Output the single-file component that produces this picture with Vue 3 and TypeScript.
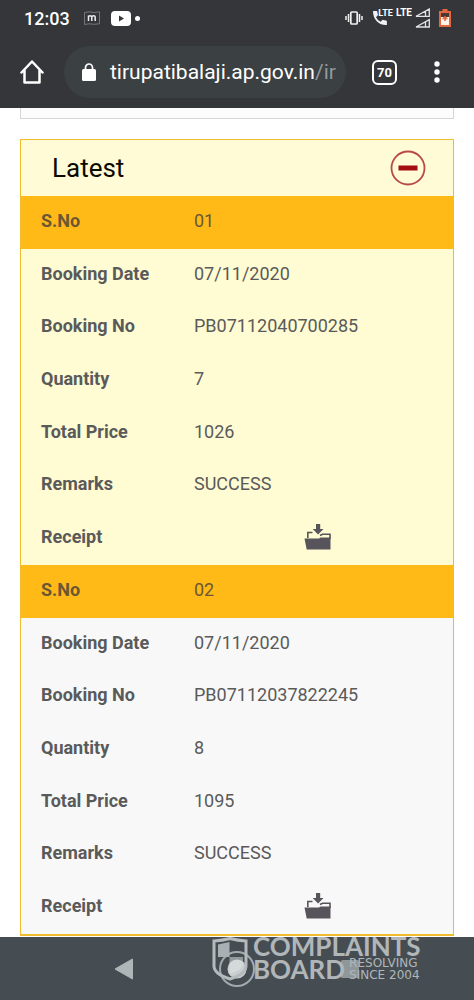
<script setup lang="ts">
interface Field {
  label: string
  value: string
}
interface Booking {
  sno: string
  tone: 'cream' | 'light'
  fields: Field[]
}

const bookings: Booking[] = [
  {
    sno: '01',
    tone: 'cream',
    fields: [
      { label: 'Booking Date', value: '07/11/2020' },
      { label: 'Booking No', value: 'PB07112040700285' },
      { label: 'Quantity', value: '7' },
      { label: 'Total Price', value: '1026' },
      { label: 'Remarks', value: 'SUCCESS' },
    ],
  },
  {
    sno: '02',
    tone: 'light',
    fields: [
      { label: 'Booking Date', value: '07/11/2020' },
      { label: 'Booking No', value: 'PB07112037822245' },
      { label: 'Quantity', value: '8' },
      { label: 'Total Price', value: '1095' },
      { label: 'Remarks', value: 'SUCCESS' },
    ],
  },
]
</script>

<template>
  <div class="phone">
    <header class="chrome">
      <div class="status">
        <span class="clock">12:03</span>
        <svg class="app-m" width="16" height="14" viewBox="0 0 16 14">
          <path d="M.5 1.5 5 .8l5 .7 5.500-.7v12l-5.500.5-5-.5-4.500.7z" fill="none" stroke="#75767a" />
          <path d="M4.500 10V4.500M4.500 6q0-1.300 1.500-1.300T7.800 6v4M7.800 6q0-1.300 1.700-1.300T11.200 6v4" fill="none" stroke="#eee" stroke-width="1.500" />
        </svg>
        <svg class="tube" width="20" height="15" viewBox="0 0 20 15">
          <rect width="20" height="15" rx="4" fill="#fff" />
          <path d="M8 4.500v6l5-3z" fill="#35363a" />
        </svg>
        <span class="dot"></span>
        <span class="grow"></span>
        <svg width="18" height="14" viewBox="0 0 18 14" fill="none" stroke="#f1f1f1">
          <rect x="5.800" y="1" width="6.400" height="12" rx="1" stroke-width="1.700" />
          <path d="M3.500 3v8M14.500 3v8" stroke-width="1.500" />
          <path d="M1 5v4M17 5v4" stroke-width="1.500" />
        </svg>
        <span class="call">
          <svg width="16" height="16" viewBox="0 0 16 16">
            <path d="M1 1h3.500q.8 0 .9 1 .1 1.700.6 3L4 7.200q1.500 3 4.500 4.600l2.200-2q1.500.5 3.300.6.900.1.900 1V15Q9 15.400 5 11.500T1 1z" fill="#f1f1f1" />
          </svg>
          <span class="lte small">LTE</span>
        </span>
        <span class="lte">LTE</span>
        <svg class="signal" width="17" height="20" viewBox="0 0 17 20" fill="none" stroke="#e4e4e4" stroke-width="1.300">
          <path d="M2 8.300 15.300 1v7.300zM11.500 3.500v4.800" />
          <path d="M2 19 15.300 11.700V19zM11.500 14v5" />
        </svg>
        <svg class="battery" width="12" height="18" viewBox="0 0 12 18">
          <path d="M3.500 0h5v2H12v16H0V2h3.500z" fill="#e4683f" />
          <path d="M2 4h8v4H2z" fill="#4a3833" />
          <path d="M2 8h2l2 3 2-3h2v8H2z" fill="#fff3eb" />
          <path d="M6 7v5M3.500 9.500h5" stroke="#e4683f" stroke-width="1.500" />
        </svg>
      </div>
      <div class="toolbar">
        <button class="home" aria-label="Home">
          <svg width="24" height="24" viewBox="0 0 24 24" fill="none" stroke="#fff" stroke-width="2.500" stroke-linejoin="round" stroke-linecap="round">
            <path d="M1.500 12.500 12 1.500l10.500 11M4.500 10v12.500h15V10" />
          </svg>
        </button>
        <button class="address">
          <svg width="14" height="18" viewBox="0 0 14 18">
            <rect y="6" width="14" height="12" rx="1.500" fill="#fff" />
            <path d="M3.500 7V4.500a3.500 3.500 0 0 1 7 0V7" fill="none" stroke="#fff" stroke-width="1.700" />
          </svg>
          <span class="url">tirupatibalaji.ap.gov.in<span class="path">/ir</span></span>
        </button>
        <button class="tabs" aria-label="Open tabs">70</button>
        <button class="more" aria-label="Menu">
          <svg width="6" height="22" viewBox="0 0 6 22" fill="#fff">
            <circle cx="3" cy="3" r="2.700" />
            <circle cx="3" cy="11" r="2.700" />
            <circle cx="3" cy="19" r="2.700" />
          </svg>
        </button>
      </div>
    </header>

    <main class="page">
      <div class="previous"></div>
      <section class="panel">
        <div class="panel-head">
          <h2>Latest</h2>
          <button class="collapse" aria-label="Collapse">
            <svg width="36" height="36" viewBox="0 0 36 36">
              <circle cx="18" cy="18" r="16.500" fill="none" stroke="#b8494b" stroke-width="1.800" />
              <rect x="8.500" y="15.500" width="19" height="5" fill="#a30d10" />
            </svg>
          </button>
        </div>
        <table class="bookings">
          <tbody v-for="b in bookings" :key="b.sno" :class="b.tone">
            <tr class="sno">
              <th scope="row">S.No</th>
              <td>{{ b.sno }}</td>
            </tr>
            <tr v-for="f in b.fields" :key="f.label">
              <th scope="row">{{ f.label }}</th>
              <td>{{ f.value }}</td>
            </tr>
            <tr>
              <th scope="row">Receipt</th>
              <td class="receipt">
                <button aria-label="Download receipt">
                  <svg width="28" height="26" viewBox="0 0 28 26" fill="#57545b">
                    <path d="M12 0h4.200v5h3.300L14.100 10.500 8.700 5H12z" />
                    <path d="M3.800 14V8.500h4.700M16 11.500l2.500-1.200H26V15" fill="none" stroke="#57545b" stroke-width="1.600" />
                    <path d="M.5 14.500H15l1.500-1H26.500v12H2.700z" />
                  </svg>
                </button>
              </td>
            </tr>
          </tbody>
        </table>
      </section>
    </main>

    <nav class="navbar">
      <button aria-label="Back">
        <svg width="20" height="22" viewBox="0 0 20 22">
          <path d="M1 11 18.500 1v20z" fill="#b0b6b8" stroke="#b0b6b8" stroke-linejoin="round" />
        </svg>
      </button>
      <button aria-label="Home">
        <svg width="38" height="38" viewBox="0 0 38 38">
          <circle cx="19" cy="19" r="17" fill="none" stroke="#a3aaad" stroke-width="2" />
          <circle cx="19" cy="19" r="9.500" fill="#c9cecf" />
        </svg>
      </button>
      <button aria-label="Recent apps">
        <svg width="20" height="20" viewBox="0 0 20 20">
          <rect x="1" y="1" width="18" height="18" rx="1.500" fill="#90979b" />
        </svg>
      </button>
      <div class="watermark">
        <svg width="36" height="46" viewBox="0 0 36 46">
          <path d="M2 6Q10 5.500 18 3.500 26 5.500 34 6v25q0 8-16 13Q2 39 2 31z" fill="none" stroke="#b5babc" stroke-width="3" />
          <path d="M6 9.500 17.500 7v15H6z" fill="#a9afb2" />
          <path d="M17.500 22H31v7q0 6-13.500 10z" fill="#dfe3e4" fill-opacity=".5" />
        </svg>
        <div class="brand">
          <div class="big">COMPLAINTS</div>
          <div class="line">
            <span class="big">BOARD</span>
            <span class="tag">RESOLVING<br />SINCE 2004</span>
          </div>
        </div>
      </div>
    </nav>
  </div>
</template>

<style>
body {
  margin: 0;
  background: #fff;
}
</style>

<style scoped>
.phone {
  min-height: 100vh;
  display: flex;
  flex-direction: column;
  font-family: Roboto, "Liberation Sans", sans-serif;
  overflow: hidden;
}
button {
  border: 0;
  padding: 0;
  margin: 0;
  background: none;
  font: inherit;
  color: inherit;
  display: flex;
  align-items: center;
  justify-content: center;
}
svg {
  display: block;
  flex: none;
}
.chrome {
  background: #35363a;
  color: #fff;
}
.status {
  height: 36px;
  display: flex;
  align-items: center;
  padding: 0 23px 0 24px;
}
.clock {
  font-size: 18px;
  font-weight: 500;
}
.app-m {
  margin-left: 14px;
}
.tube {
  margin-left: 11px;
}
.dot {
  width: 5px;
  height: 5px;
  border-radius: 50%;
  background: #fff;
  margin-left: 4px;
}
.grow {
  flex: 1;
}
.call {
  display: flex;
  align-items: flex-start;
  margin-left: 9px;
}
.lte {
  font-size: 10px;
  line-height: 10px;
  font-weight: 700;
  align-self: flex-start;
  margin: 8px 2px 0 3px;
}
.lte.small {
  font-size: 9px;
  margin: -2px 0 0 -10px;
}
.battery {
  margin-left: 8px;
}
.toolbar {
  height: 72px;
  display: flex;
  align-items: center;
  padding: 0 34px 0 20px;
}
.address {
  flex: 1;
  min-width: 0;
  height: 52px;
  margin-left: 20px;
  padding: 0 8px 0 18px;
  border-radius: 26px;
  background: #3b4043;
  justify-content: flex-start;
  gap: 14px;
}
.url {
  font-size: 21px;
  line-height: 28px;
  white-space: nowrap;
}
.path {
  color: #94989b;
}
.tabs {
  box-sizing: border-box;
  width: 25px;
  height: 25px;
  margin: 0 37px 0 26px;
  border: 2px solid #fff;
  border-radius: 6px;
  font-size: 13px;
  font-weight: 700;
}
.page {
  flex: 1;
  padding: 0 20px;
  background: #fff;
}
.previous {
  height: 10px;
  border: 1px solid #d6d6d6;
  border-top: 0;
  background: #fcfcfc;
  margin-bottom: 20px;
}
.panel {
  border: 1px solid #eebc2d;
  border-bottom-width: 2px;
}
.panel-head {
  height: 56px;
  display: flex;
  align-items: center;
  justify-content: space-between;
  padding: 0 27px 0 31px;
  background: #fffbd6;
}
h2 {
  margin: 0;
  font-size: 26px;
  line-height: 32px;
  font-weight: 400;
  color: #0a0a00;
}
.bookings {
  width: 100%;
  height: 738px;
  border-collapse: collapse;
  table-layout: fixed;
  font-size: 18px;
  line-height: 24px;
  color: #5a5a5a;
}
.cream {
  background: #fffbd2;
}
.light {
  background: #f8f8f8;
}
.sno {
  background: #ffba18;
  color: #6b5733;
}
th,
td {
  padding: 0 0 3px;
  text-align: left;
  font-weight: 400;
}
th {
  width: 173px;
  padding-left: 20px;
  font-weight: 700;
  box-sizing: border-box;
}
.receipt {
  padding-right: 12px;
}
.receipt button {
  height: 24px;
  margin: 0 auto;
}
.navbar {
  position: relative;
  height: 63px;
  display: flex;
  justify-content: center;
  background: #464d52;
}
.navbar button {
  width: 113px;
}
.watermark {
  position: absolute;
  left: 50%;
  top: -2px;
  margin-left: -25px;
  display: flex;
  gap: 5px;
}
.brand {
  color: #b1b6b9;
  font-family: Lato, sans-serif;
  font-weight: 700;
}
.big {
  font-size: 26px;
  line-height: 22px;
}
.line {
  display: flex;
  align-items: center;
  gap: 4px;
}
.tag {
  font-family: "DejaVu Sans", sans-serif;
  font-size: 12px;
  line-height: 12px;
  font-weight: 400;
  white-space: nowrap;
}
</style>
